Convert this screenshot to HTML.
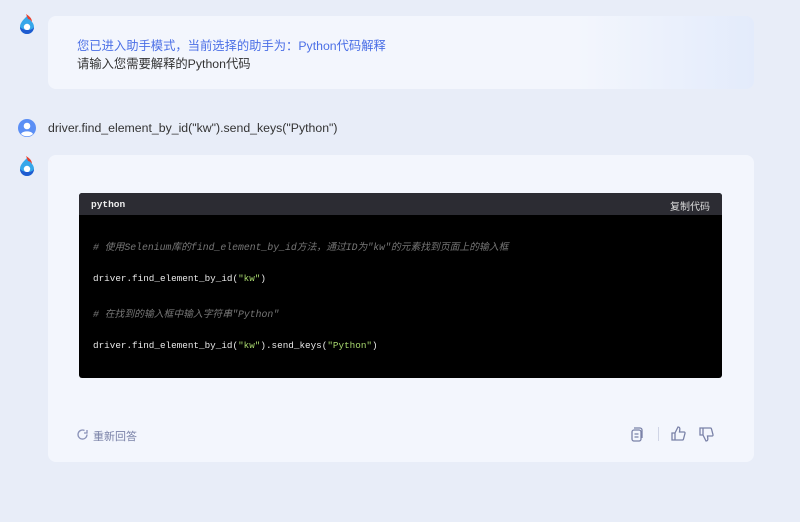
<!DOCTYPE html>
<html><head><meta charset="utf-8"><style>
*{margin:0;padding:0;box-sizing:border-box}
body{width:800px;height:522px;background:#e8edf8;font-family:"Liberation Sans","Noto Sans CJK SC",sans-serif;position:relative;overflow:hidden}
.card{position:absolute;left:48px;width:706px;background:#f3f6fd;border-radius:8px}
.logo{position:absolute;width:20px;height:22px}
.mono{font-family:"Liberation Mono","Noto Sans CJK SC",monospace}
</style></head><body>
<svg class="logo" style="left:17px;top:13px" viewBox="0 0 20 22"><path d="M10 3C6 7 3 10 3 14a7 7 0 0 0 14 0c0-2-1-4-2-5" fill="#36a7ea"/><circle cx="10" cy="14" r="3.2" fill="#fff"/><path d="M9 1c3 2 6 4 6 8-1-2-3-3-4-3z" fill="#e8402f"/><path d="M3 14a7 7 0 0 0 14 0c-2 4-10 4-14 0z" fill="#1e5bd0"/></svg>
<div class="card" style="top:16px;height:73px;background:linear-gradient(90deg,#f3f6fd 75%,#e3ebfb)">
<div style="position:absolute;left:29px;top:20px;font-size:12.3px;color:#4b6fe6">您已进入助手模式，当前选择的助手为：Python代码解释</div>
<div style="position:absolute;left:29px;top:38px;font-size:12.3px;color:#333">请输入您需要解释的Python代码</div>
</div>
<svg style="position:absolute;left:18px;top:119px" width="18" height="18" viewBox="0 0 18 18"><circle cx="9" cy="9" r="9" fill="#5b8ff5"/><circle cx="9" cy="7" r="3.3" fill="#fff"/><path d="M3 15c1.5-3.5 10.5-3.5 12 0a9 9 0 0 1-12 0z" fill="#fff"/></svg>
<div style="position:absolute;left:48px;top:121px;font-size:12.3px;color:#333">driver.find_element_by_id("kw").send_keys("Python")</div>
<svg class="logo" style="left:17px;top:155px" viewBox="0 0 20 22"><path d="M10 3C6 7 3 10 3 14a7 7 0 0 0 14 0c0-2-1-4-2-5" fill="#36a7ea"/><circle cx="10" cy="14" r="3.2" fill="#fff"/><path d="M9 1c3 2 6 4 6 8-1-2-3-3-4-3z" fill="#e8402f"/><path d="M3 14a7 7 0 0 0 14 0c-2 4-10 4-14 0z" fill="#1e5bd0"/></svg>
<div class="card" style="top:155px;height:307px">
<div style="position:absolute;left:31px;top:38px;width:643px;height:185px;background:#000;border-radius:3px;overflow:hidden">
<div style="height:22px;background:#2c2c33;position:relative">
<span class="mono" style="position:absolute;left:12px;top:6px;font-size:9.5px;font-weight:bold;color:#eee">python</span>
<span style="position:absolute;right:12px;top:5px;font-size:10px;color:#ddd">复制代码</span></div>
<div class="mono" style="position:absolute;left:14px;top:46px;font-size:9.8px;color:#777;font-style:italic">#&nbsp;使用Selenium库的find_element_by_id方法，通过ID为"kw"的元素找到页面上的输入框</div>
<div class="mono" style="position:absolute;left:14px;top:80px;font-size:9.3px;color:#e8e8e8">driver.find_element_by_id(<span style="color:#a8d86e">"kw"</span>)</div>
<div class="mono" style="position:absolute;left:14px;top:113px;font-size:9.8px;color:#777;font-style:italic">#&nbsp;在找到的输入框中输入字符串"Python"</div>
<div class="mono" style="position:absolute;left:14px;top:147px;font-size:9.3px;color:#e8e8e8">driver.find_element_by_id(<span style="color:#a8d86e">"kw"</span>).send_keys(<span style="color:#a8d86e">"Python"</span>)</div>
</div>
<svg style="position:absolute;left:28px;top:273px" width="13" height="13" viewBox="0 0 13 13"><path d="M11 6.5A4.5 4.5 0 1 1 8.5 2.5M11 2v3H8" fill="none" stroke="#8a92b8" stroke-width="1.3"/></svg>
<div style="position:absolute;left:45px;top:273px;font-size:11px;color:#7a82a8">重新回答</div>
<svg style="position:absolute;left:582px;top:272px" width="14" height="15" viewBox="0 0 14 15"><rect x="2" y="3" width="9" height="11" rx="2" fill="none" stroke="#7a82a8" stroke-width="1.3"/><path d="M4 1h6a2 2 0 0 1 2 2v8" fill="none" stroke="#7a82a8" stroke-width="1.3"/><path d="M4.5 7h4M4.5 10h4" stroke="#7a82a8" stroke-width="1.2"/></svg>
<div style="position:absolute;left:610px;top:272px;width:1px;height:14px;background:#d0d5e6"></div>
<svg style="position:absolute;left:623px;top:271px" width="15" height="15" viewBox="0 0 15 15"><path d="M1 7h3v7H1zM4 7l3-6c1.5 0 2 1 1.8 2.5L8.5 6H13a1 1 0 0 1 1 1.3L12.5 13a1.2 1.2 0 0 1-1.2 1H4" fill="none" stroke="#7a82a8" stroke-width="1.3"/></svg>
<svg style="position:absolute;left:651px;top:272px" width="15" height="15" viewBox="0 0 15 15"><path d="M1 1h3v7H1zM4 8l3 6c1.5 0 2-1 1.8-2.5L8.5 9H13a1 1 0 0 0 1-1.3L12.5 2a1.2 1.2 0 0 0-1.2-1H4" fill="none" stroke="#7a82a8" stroke-width="1.3"/></svg>
</div>
</body></html>
